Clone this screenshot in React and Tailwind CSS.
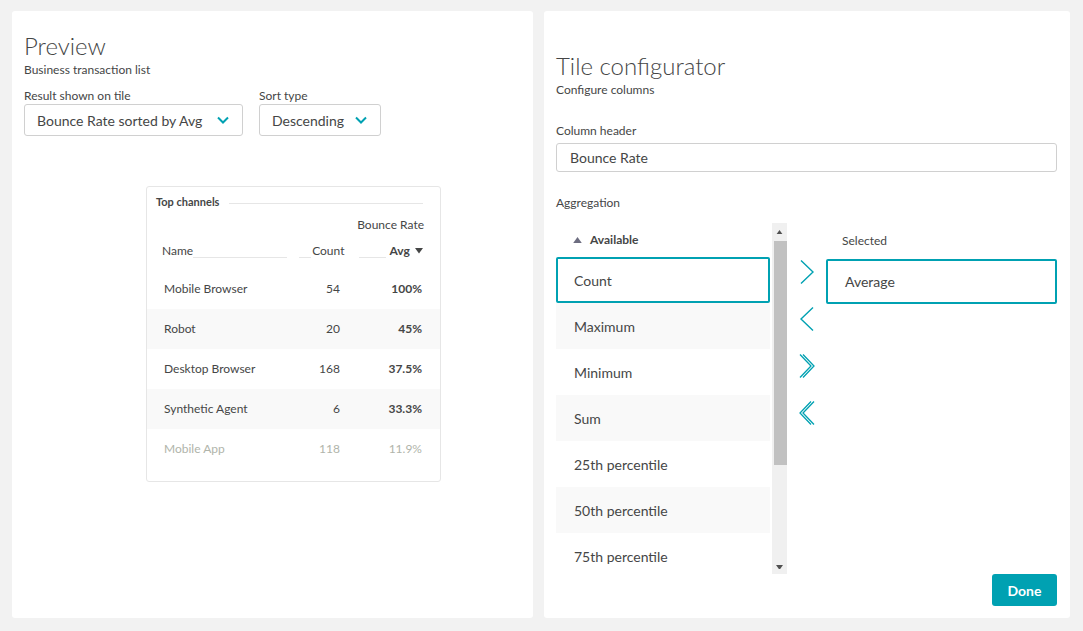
import React from "react";

const font = { fontFamily: "Lato, 'Open Sans', sans-serif" };

function Chevron({ className = "" }) {
  return (
    <svg width="12" height="8" viewBox="0 0 12 8" className={className}>
      <path d="M1 1.5 L6 6.5 L11 1.5" fill="none" stroke="#00a1b2" strokeWidth="2" />
    </svg>
  );
}

function ArrowRight() {
  return (
    <svg width="18" height="26" viewBox="0 0 18 26">
      <path d="M3 1.5 L15 13 L3 24.5" fill="none" stroke="#00a1b2" strokeWidth="1.4" />
    </svg>
  );
}
function ArrowLeft() {
  return (
    <svg width="18" height="26" viewBox="0 0 18 26">
      <path d="M15 1.5 L3 13 L15 24.5" fill="none" stroke="#00a1b2" strokeWidth="1.4" />
    </svg>
  );
}
function DoubleRight() {
  return (
    <svg width="18" height="26" viewBox="0 0 18 26">
      <path d="M2 1.5 L13 13 L2 24.5" fill="none" stroke="#00a1b2" strokeWidth="1.3" />
      <path d="M5 1.5 L16 13 L5 24.5" fill="none" stroke="#00a1b2" strokeWidth="1.3" />
    </svg>
  );
}
function DoubleLeft() {
  return (
    <svg width="18" height="26" viewBox="0 0 18 26">
      <path d="M16 1.5 L5 13 L16 24.5" fill="none" stroke="#00a1b2" strokeWidth="1.3" />
      <path d="M13 1.5 L2 13 L13 24.5" fill="none" stroke="#00a1b2" strokeWidth="1.3" />
    </svg>
  );
}

function Tri({ up = true, size = 8, color = "#505050" }) {
  return (
    <svg width={size} height={size * 0.7} viewBox="0 0 10 7">
      <path d={up ? "M0 7 L5 0 L10 7 Z" : "M0 0 L5 7 L10 0 Z"} fill={color} />
    </svg>
  );
}

const rows = [
  { name: "Mobile Browser", count: "54", avg: "100%" },
  { name: "Robot", count: "20", avg: "45%" },
  { name: "Desktop Browser", count: "168", avg: "37.5%" },
  { name: "Synthetic Agent", count: "6", avg: "33.3%" },
  { name: "Mobile App", count: "118", avg: "11.9%", faded: true },
];

const items = [
  "Maximum",
  "Minimum",
  "Sum",
  "25th percentile",
  "50th percentile",
  "75th percentile",
];

export default function App() {
  return (
    <div style={font} className="w-[1083px] h-[631px] bg-[#f2f2f2] flex gap-[11px] pl-[12px] pt-[11px] text-[#454646]">
      {/* Left panel */}
      <div className="w-[521px] h-[607px] bg-white rounded-[3px] px-[12px] pt-[20px] flex flex-col">
        <div className="text-[24px] font-light leading-[30px] text-[#454646]">Preview</div>
        <div className="text-[12px] leading-[16px] mt-[1px]">Business transaction list</div>
        <div className="flex gap-[16px] mt-[10px]">
          <div className="flex flex-col">
            <div className="text-[12px] leading-[16px]">Result shown on tile</div>
            <div className="w-[219px] h-[32px] border border-[#d0d0d0] rounded-[3px] flex items-center justify-between pl-[12px] pr-[13px] text-[14px]">
              <span>Bounce Rate sorted by Avg</span>
              <Chevron />
            </div>
          </div>
          <div className="flex flex-col">
            <div className="text-[12px] leading-[16px]">Sort type</div>
            <div className="w-[122px] h-[32px] border border-[#d0d0d0] rounded-[3px] flex items-center justify-between pl-[12px] pr-[13px] text-[14px]">
              <span>Descending</span>
              <Chevron />
            </div>
          </div>
        </div>

        {/* Table card */}
        <div className="ml-[122px] mt-[50px] w-[295px] h-[296px] border border-[#e6e6e6] rounded-[3px] flex flex-col">
          <div className="flex items-center pl-[9px] pr-[17px] pt-[8px]">
            <span className="text-[11px] font-bold leading-[14px]">Top channels</span>
            <div className="flex-1 ml-[10px] h-px bg-[#e6e6e6] mt-[2px]" />
          </div>
          <div className="text-[12px] leading-[16px] text-right pr-[16px] mt-[8px]">Bounce Rate</div>
          <div className="flex items-end pl-[15px] pr-[15px] mt-[10px] text-[12px] leading-[16px]">
            <span>Name</span>
            <div className="w-[94px] h-px bg-[#e6e6e6] mb-[1px]" />
            <div className="w-[12px] h-px bg-[#e6e6e6] mb-[1px] ml-[12px]" />
            <span className="ml-[1px]">Count</span>
            <div className="w-[27px] h-px bg-[#e6e6e6] mb-[1px] ml-[15px]" />
            <span className="ml-[3px] font-bold flex items-center gap-[5px]">Avg <Tri up={false} size={8} color="#454646" /></span>
          </div>
          <div className="mt-[10px] flex flex-col">
            {rows.map((r, i) => (
              <div
                key={r.name}
                className={`h-[40px] flex items-center text-[12px] ${i % 2 === 1 ? "bg-[#f9f9f9]" : ""} ${r.faded ? "text-[#b0b4aa]" : "text-[#454646]"}`}
              >
                <span className="pl-[17px] w-[150px]">{r.name}</span>
                <span className="w-[43px] text-right">{r.count}</span>
                <span className={`w-[82px] text-right ${r.faded ? "" : "font-bold"}`}>{r.avg}</span>
              </div>
            ))}
          </div>
        </div>
      </div>

      {/* Right panel */}
      <div className="w-[526px] h-[607px] bg-white rounded-[3px] pl-[12px] pr-[13px] pt-[40px] flex flex-col">
        <div className="text-[24px] font-light leading-[30px]">Tile configurator</div>
        <div className="text-[12px] leading-[16px] mt-[1px]">Configure columns</div>
        <div className="text-[12px] leading-[16px] mt-[25px]">Column header</div>
        <div className="mt-[4px] w-[501px] h-[29px] border border-[#d0d0d0] rounded-[3px] flex items-center pl-[13px] text-[14px]">
          Bounce Rate
        </div>
        <div className="text-[12px] leading-[16px] mt-[23px]">Aggregation</div>

        <div className="mt-[12px] flex">
          {/* Available list */}
          <div className="flex w-[231px] h-[351px]">
            <div className="w-[214px] flex flex-col overflow-hidden">
              <div className="h-[34px] shrink-0 flex items-center pl-[17px] text-[12px] font-bold">
                <span className="mr-[8px] flex items-center"><Tri up size={9} color="#6d6d80" /></span>
                Available
              </div>
              <div className="h-[46px] shrink-0 border-2 border-[#00a1b2] rounded-[2px] flex items-center pl-[16px] text-[14px]">Count</div>
              {items.map((it, i) => (
                <div
                  key={it}
                  className={`h-[46px] shrink-0 flex items-center pl-[18px] text-[14px] ${i % 2 === 0 ? "bg-[#f9f9f9]" : ""}`}
                >
                  {it}
                </div>
              ))}
            </div>
            <div className="ml-[2px] w-[15px] h-[351px] bg-[#f0f0f0] flex flex-col items-end">
              <div className="h-[18px] w-full flex items-center justify-center"><Tri up size={7} /></div>
              <div className="w-[13px] h-[224px] bg-[#c1c1c1]" />
              <div className="flex-1" />
              <div className="h-[14px] w-full flex items-center justify-center"><Tri up={false} size={7} /></div>
            </div>
          </div>

          {/* Arrows */}
          <div className="w-[40px] flex flex-col items-center pt-[36px] gap-[21px]">
            <ArrowRight />
            <ArrowLeft />
            <DoubleRight />
            <DoubleLeft />
          </div>

          {/* Selected */}
          <div className="flex flex-col">
            <div className="h-[36px] flex items-center pl-[16px] text-[12px]">Selected</div>
            <div className="w-[231px] h-[45px] border-2 border-[#00a1b2] rounded-[2px] flex items-center pl-[17px] text-[14px]">Average</div>
          </div>
        </div>

        <div className="flex justify-end">
          <div className="w-[65px] h-[32px] bg-[#00a1b2] rounded-[3px] text-white text-[14px] font-bold flex items-center justify-center">Done</div>
        </div>
      </div>
    </div>
  );
}
